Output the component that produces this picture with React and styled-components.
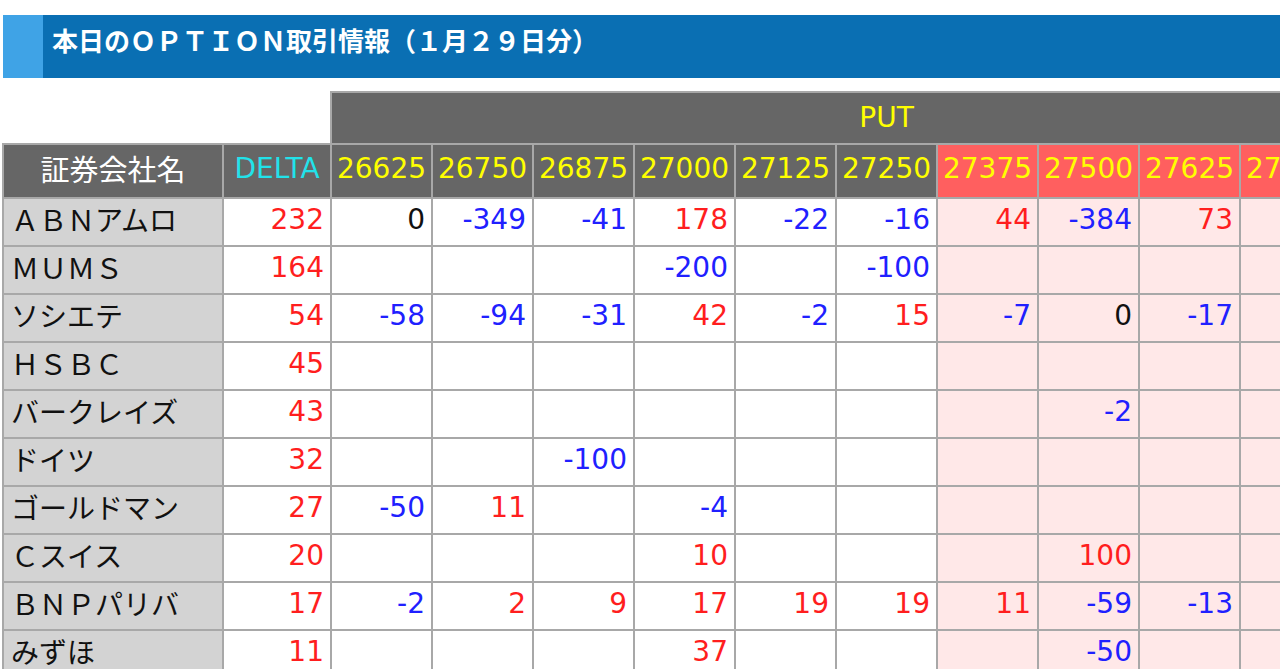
import React from "react";
import styled, { createGlobalStyle } from "styled-components";

const GlobalStyle = createGlobalStyle`
    html, body {
        margin: 0;
        padding: 0;
        background: #ffffff;
        overflow: hidden;
    }
    body {
        font-family: "Noto Sans CJK JP", "DejaVu Sans", sans-serif;
    }
`

const Page = styled.div`
    width: 1280px;
    height: 669px;
    overflow: hidden;
    padding-top: 15px;
    padding-left: 2px;
    box-sizing: border-box;
`

const TitleBar = styled.div`
    display: flex;
    height: 63px;
    margin-left: 1px;
    background-color: #0a6fb3;
`

const TitleMark = styled.div`
    width: 40px;
    flex-shrink: 0;
    background-color: #3fa3e6;
`

const TitleText = styled.h1`
    margin: 0;
    padding: 12px 0 0 9px;
    font-family: "Noto Sans CJK JP", sans-serif;
    font-size: 26px;
    line-height: 26px;
    font-weight: 700;
    color: #ffffff;
    white-space: nowrap;
`

const Table = styled.table`
    margin-top: 13px;
    border-collapse: collapse;
    table-layout: fixed;
    width: 1439px;
    font-family: "DejaVu Sans", "Noto Sans CJK JP", sans-serif;
    font-size: 28px;
`

const Blank = styled.th`
    background: #ffffff;
    border: none;
`

const GroupHead = styled.th`
    height: 48px;
    padding: 0 0 2px;
    background-color: #666666;
    border: 2px solid #a8a8a8;
    color: #ffff00;
    font-weight: normal;
    text-align: center;
`

const HeadCell = styled.th`
    height: 46px;
    padding: 0 0 6px;
    border: 2px solid #a8a8a8;
    background-color: ${(p) => (p.$hot ? "#ff5f5f" : "#666666")};
    color: ${(p) => p.$color || "#ffff00"};
    font-family: ${(p) => (p.$jp ? `"Noto Sans CJK JP", sans-serif` : "inherit")};
    font-size: ${(p) => (p.$jp ? "29px" : "28px")};
    font-weight: normal;
    text-align: center;
    white-space: nowrap;
    overflow: hidden;
`

const NameCell = styled.td`
    height: 40px;
    padding: 0 0 6px 7px;
    border: 2px solid #a8a8a8;
    background-color: #d3d3d3;
    color: #111111;
    font-family: "Noto Sans CJK JP", sans-serif;
    font-size: 28px;
    white-space: nowrap;
    overflow: hidden;
`

const NumCell = styled.td`
    height: 40px;
    padding: 0 6px 6px 0;
    border: 2px solid #a8a8a8;
    background-color: ${(p) => (p.$hot ? "#ffe8e8" : "#ffffff")};
    color: ${(p) => p.$color};
    text-align: right;
    white-space: nowrap;
    overflow: hidden;
`

const strikes = [26625, 26750, 26875, 27000, 27125, 27250, 27375, 27500, 27625, 27750, 27875];
const hotFrom = 27375;

const rows = [
    { name: "ＡＢＮアムロ", delta: 232, v: [0, -349, -41, 178, -22, -16, 44, -384, 73] },
    { name: "ＭＵＭＳ", delta: 164, v: [null, null, null, -200, null, -100] },
    { name: "ソシエテ", delta: 54, v: [-58, -94, -31, 42, -2, 15, -7, 0, -17] },
    { name: "ＨＳＢＣ", delta: 45, v: [] },
    { name: "バークレイズ", delta: 43, v: [null, null, null, null, null, null, null, -2] },
    { name: "ドイツ", delta: 32, v: [null, null, -100] },
    { name: "ゴールドマン", delta: 27, v: [-50, 11, null, -4] },
    { name: "Ｃスイス", delta: 20, v: [null, null, null, 10, null, null, null, 100] },
    { name: "ＢＮＰパリバ", delta: 17, v: [-2, 2, 9, 17, 19, 19, 11, -59, -13] },
    { name: "みずほ", delta: 11, v: [null, null, null, 37, null, null, null, -50] },
];

function tone(n) {
    if (n > 0) return "#ff1e1e";
    if (n < 0) return "#2020ff";
    return "#111111";
}

export default function App() {
    return (
        <>
            <GlobalStyle />
            <Page>
                <TitleBar>
                    <TitleMark />
                    <TitleText>本日のＯＰＴＩＯＮ取引情報（１月２９日分）</TitleText>
                </TitleBar>
                <Table>
                    <colgroup>
                        <col style={{ width: "220px" }} />
                        <col style={{ width: "108px" }} />
                        {strikes.map((s) => (
                            <col key={s} style={{ width: "101px" }} />
                        ))}
                    </colgroup>
                    <thead>
                        <tr>
                            <Blank colSpan={2} />
                            <GroupHead colSpan={strikes.length}>PUT</GroupHead>
                        </tr>
                        <tr>
                            <HeadCell $jp $color="#ffffff">証券会社名</HeadCell>
                            <HeadCell $color="#22e2ea">DELTA</HeadCell>
                            {strikes.map((s) => (
                                <HeadCell key={s} $hot={s >= hotFrom}>{s}</HeadCell>
                            ))}
                        </tr>
                    </thead>
                    <tbody>
                        {rows.map((r) => (
                            <tr key={r.name}>
                                <NameCell>{r.name}</NameCell>
                                <NumCell $color={tone(r.delta)}>{r.delta}</NumCell>
                                {strikes.map((s, i) => {
                                    const n = r.v[i] ?? null;
                                    return (
                                        <NumCell key={s} $hot={s >= hotFrom} $color={tone(n)}>
                                            {n === null ? "" : n}
                                        </NumCell>
                                    );
                                })}
                            </tr>
                        ))}
                    </tbody>
                </Table>
            </Page>
        </>
    );
}
